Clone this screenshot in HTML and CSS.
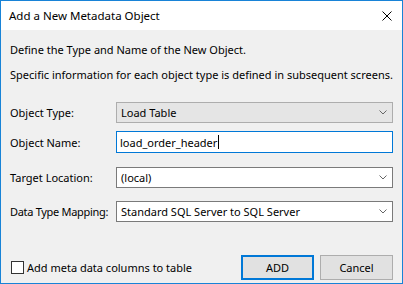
FILE: index.html
```html
<!DOCTYPE html>
<html lang="en">
<head>
  <meta charset="UTF-8">
  <title>Add a New Metadata Object</title>
  <link rel="stylesheet" href="styles.css">
</head>
<body>

  <!-- Dialog window -->
  <div class="window">
    <div class="title-bar">
      <span class="title">Add a New Metadata Object</span>
      <svg class="close" width="10" height="10" viewBox="0 0 10 10">
        <path d="M0.5 0.5 L9.5 9.5 M9.5 0.5 L0.5 9.5" stroke="#000" stroke-width="1" fill="none"/>
      </svg>
    </div>

    <div class="content">
      <p class="intro first">Define the Type and Name of the New Object.</p>
      <p class="intro">Specific information for each object type is defined in subsequent screens.</p>

      <div class="form">
        <div class="row row-type">
          <label>Object Type:</label>
          <div class="combo combo-locked">
            <span>Load Table</span>
            <svg class="chevron" width="8" height="5" viewBox="0 0 8 5"><polyline points="0.5,0.5 4,4 7.5,0.5" stroke="#666" fill="none"/></svg>
          </div>
        </div>
        <div class="row row-name">
          <label>Object Name:</label>
          <div class="textbox"><span>load_order_header</span><span class="caret"></span></div>
        </div>
        <div class="row row-target">
          <label>Target Location:</label>
          <div class="combo">
            <span>(local)</span>
            <svg class="chevron" width="8" height="5" viewBox="0 0 8 5"><polyline points="0.5,0.5 4,4 7.5,0.5" stroke="#666" fill="none"/></svg>
          </div>
        </div>
        <div class="row row-mapping">
          <label class="tight">Data Type Mapping:</label>
          <div class="combo">
            <span>Standard SQL Server to SQL Server</span>
            <svg class="chevron" width="8" height="5" viewBox="0 0 8 5"><polyline points="0.5,0.5 4,4 7.5,0.5" stroke="#666" fill="none"/></svg>
          </div>
        </div>
      </div>

      <div class="footer">
        <label class="check"><span class="box"></span>Add meta data columns to table</label>
        <div class="buttons">
          <button class="btn btn-default">ADD</button>
          <button class="btn">Cancel</button>
        </div>
      </div>
    </div>
  </div>

</body>
</html>
```

FILE: styles.css
```css
/* Global Styles */
body {
  margin: 0;
  padding: 0;
  font-family: 'Noto Sans', 'Liberation Sans', sans-serif;
  font-size: 11px;
  color: #000;
  background-color: #f0f0f0;
  white-space: nowrap;
}

/* Window */
.window {
  width: 403px;
  height: 284px;
  box-sizing: border-box;
  border: 1px solid #1883d7;
  background-color: #f0f0f0;
  display: flex;
  flex-direction: column;
}

.title-bar {
  height: 29px;
  background-color: #fff;
  display: flex;
  align-items: center;
  justify-content: space-between;
  padding: 0 10px 0 8px;
  flex-shrink: 0;
}

.title {
  font-size: 11.5px;
  padding-bottom: 1px;
}

.close {
  display: block;
}

/* Content */
.content {
  flex: 1;
  display: flex;
  flex-direction: column;
  padding: 12px 9px 3px 9px;
}

.intro {
  margin: 0;
  height: 15px;
  line-height: 15px;
}

.intro + .intro {
  margin-top: 10px;
}

/* Form rows */
.form {
  margin-top: 20px;
}

.row {
  display: flex;
  align-items: center;
}

.row label {
  width: 106px;
  flex-shrink: 0;
}

.row label.tight {
  letter-spacing: -0.3px;
}

.row-name {
  margin-top: 8px;
}

.row-target {
  margin-top: 14px;
}

.row-mapping {
  margin-top: 13px;
}

.combo,
.textbox {
  flex: 1;
  box-sizing: border-box;
  display: flex;
  align-items: center;
  justify-content: space-between;
  background-color: #fff;
}

.combo {
  height: 21px;
  border: 1px solid #7a7a7a;
  padding: 0 5px 0 4px;
}

.combo-locked {
  background-color: #e5e5e5;
  border-color: #adadad;
}

.textbox {
  height: 22px;
  border: 1px solid #0078d7;
  padding: 0 4px 0 3px;
  justify-content: flex-start;
}

.caret {
  display: inline-block;
  width: 1px;
  height: 14px;
  background-color: #000;
  margin-left: 1px;
}

.chevron {
  display: block;
}

/* Footer */
.footer {
  margin-top: auto;
  display: flex;
  align-items: center;
  justify-content: space-between;
}

.check {
  display: flex;
  align-items: center;
  margin-left: 1px;
}

.box {
  width: 13px;
  height: 13px;
  box-sizing: border-box;
  border: 1px solid #333;
  background-color: #fff;
  margin-right: 3px;
}

.buttons {
  display: flex;
  gap: 6px;
}

.btn {
  width: 73px;
  height: 25px;
  box-sizing: border-box;
  background-color: #e1e1e1;
  border: 1px solid #adadad;
  font-family: inherit;
  font-size: 11px;
  color: #000;
  padding: 0;
}

.btn-default {
  border: 2px solid #0078d7;
}
```
